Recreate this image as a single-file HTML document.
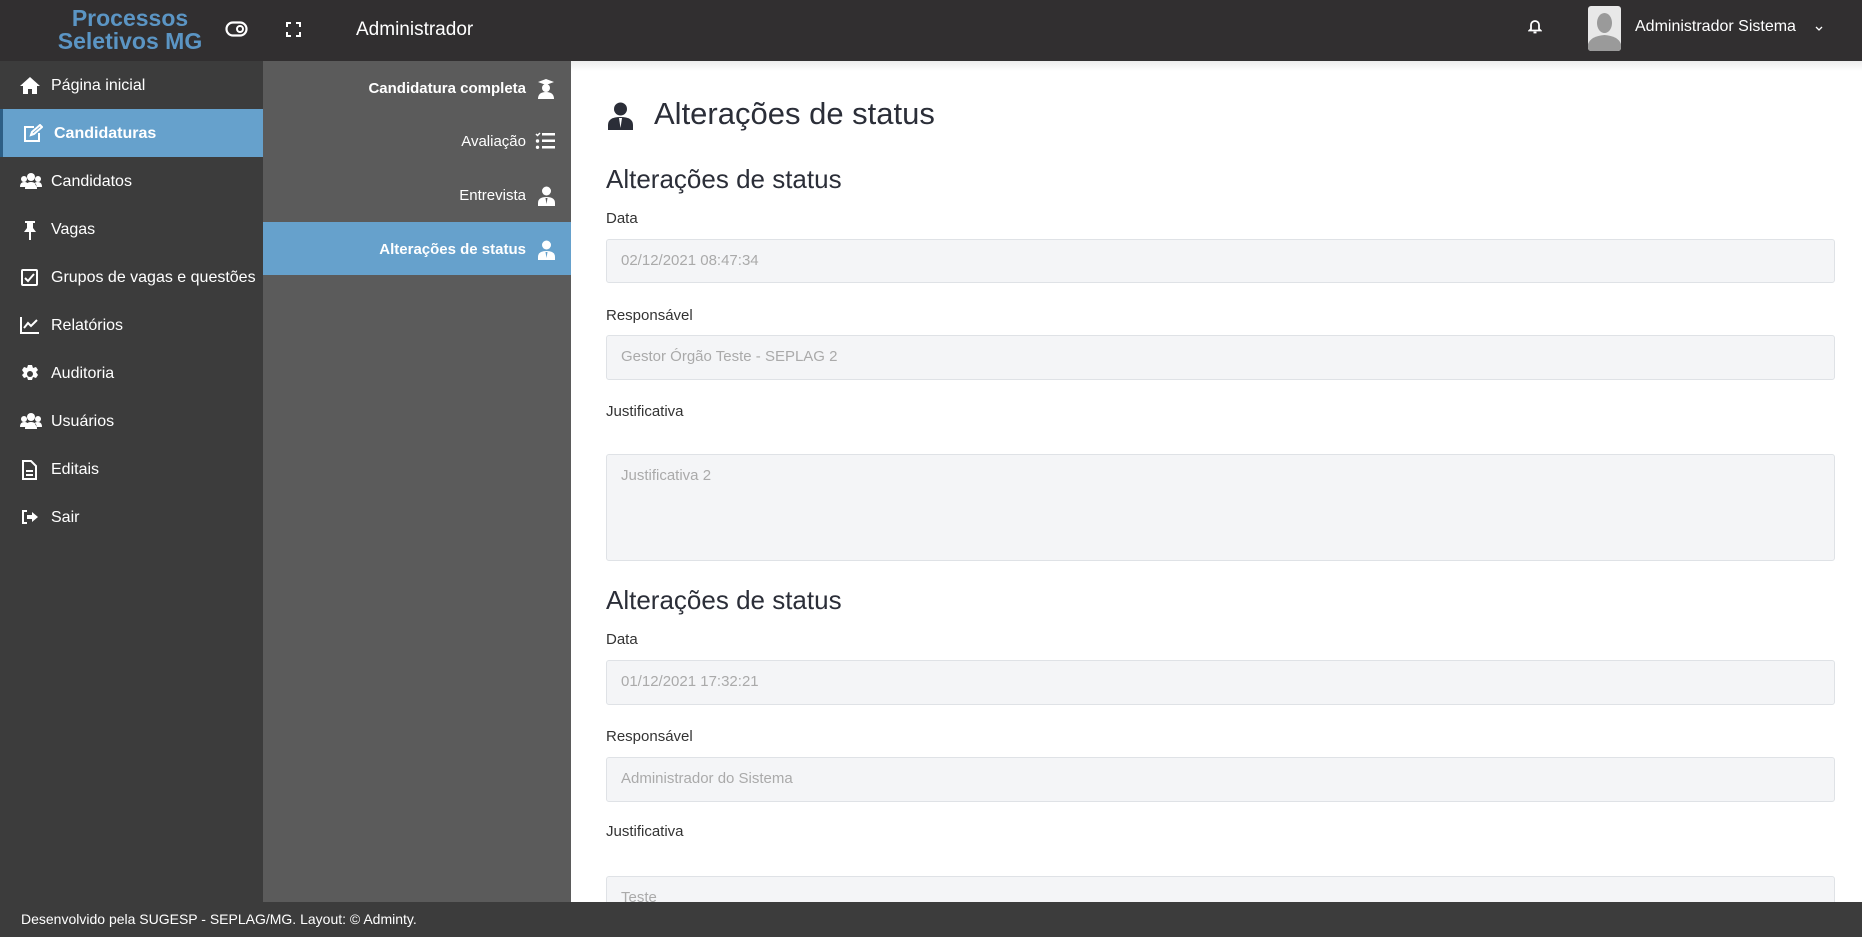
<!DOCTYPE html>
<html><head><meta charset="utf-8"><style>
*{box-sizing:border-box;margin:0;padding:0}
body{width:1862px;height:937px;overflow:hidden;font-family:"Liberation Sans",sans-serif;background:#fff;position:relative}
.hdr{position:absolute;left:0;top:0;width:1862px;height:61px;background:#312f30;color:#fff}
.logo{position:absolute;left:20px;top:7px;width:220px;text-align:center;color:#5b95c4;font-weight:bold;font-size:23px;line-height:23px}
.side{position:absolute;left:0;top:61px;width:263px;height:841px;background:#3c3c3c}
.sub{position:absolute;left:263px;top:61px;width:308px;height:841px;background:#5b5b5b}
.si{position:absolute;left:0;width:263px;height:48px;color:#fff;font-size:16px;line-height:50px;padding-left:51px}
.si svg{position:absolute;left:20px;top:15px}
.si.act{background:#66a1cc;border-left:3px solid #2d5f86;font-weight:bold}
.sb{position:absolute;left:0;width:308px;height:53px;color:#fff;font-size:15px;line-height:55px;text-align:right;padding-right:45px}
.sb svg{position:absolute;right:16px;top:18px}
.sb.act{background:#66a1cc;font-weight:bold}
.main{position:absolute;left:571px;top:61px;width:1291px;height:841px;overflow:hidden}
.lbl{position:absolute;left:35px;font-size:15px;color:#333}
.inp{position:absolute;left:35px;width:1229px;background:#f4f5f7;border:1px solid #dfe2e6;border-radius:3px;color:#aaa;font-size:15px;padding:12px 14px}
.h2{position:absolute;left:35px;font-size:26px;color:#2b2e38}
.foot{position:absolute;left:0;top:902px;width:1862px;height:35px;background:#3c3c3c;color:#fff;font-size:14px;line-height:35px;padding-left:21px}
</style></head><body>
<div class="hdr">
 <div class="logo">Processos<br>Seletivos MG</div>
 <svg style="position:absolute;left:225px;top:21px" width="23" height="16" viewBox="0 0 23 16"><rect x="1.5" y="1.5" width="20" height="13" rx="6.5" fill="none" stroke="#fff" stroke-width="2.2"/><circle cx="15" cy="8" r="3" fill="none" stroke="#fff" stroke-width="2"/></svg>
 <svg style="position:absolute;left:286px;top:22px" width="15" height="15" viewBox="0 0 15 15" fill="none" stroke="#fff" stroke-width="2"><path d="M1 5V1H5M10 1H14V5M14 10V14H10M5 14H1V10"/></svg>
 <div style="position:absolute;left:356px;top:19px;font-size:19px">Administrador</div>
 <svg style="position:absolute;left:1528px;top:18px" width="14" height="16" viewBox="0 0 14 16" fill="none" stroke="#fff" stroke-width="1.8"><path d="M3 11V7a4 4 0 0 1 8 0v4l1.5 1.5h-11z"/><path d="M5.5 14.5h3"/></svg>
 <div style="position:absolute;left:1588px;top:6px;width:33px;height:45px;background:#e8e8e8;border-radius:3px;overflow:hidden"><svg width="33" height="45" viewBox="0 0 33 45"><ellipse cx="16.5" cy="17" rx="7.5" ry="10" fill="#9a9a9a"/><path d="M0 45V38q3-8 16.5-9q13.5 1 16.5 9v7z" fill="#9a9a9a"/></svg></div>
 <div style="position:absolute;left:1635px;top:18px;font-size:16px">Administrador Sistema</div>
 <svg style="position:absolute;left:1815px;top:26px" width="8" height="6" viewBox="0 0 8 6" fill="none" stroke="#fff" stroke-width="1.3"><path d="M1 1l3 3 3-3"/></svg>
</div>
<div class="side">
 <div class="si" style="top:0"><svg width="20" height="18" viewBox="0 0 20 18" fill="#fff"><path d="M10 1L0 10h3v8h5v-5h4v5h5v-8h3z"/></svg>Página inicial</div>
 <div class="si act" style="top:48px"><svg width="20" height="18" viewBox="0 0 20 18" fill="none" stroke="#fff" stroke-width="2"><path d="M11 3H2v14h14V9"/><path d="M8 11l1-3 8-7 2 2-8 7z"/></svg>Candidaturas</div>
 <div class="si" style="top:96px"><svg width="22" height="18" viewBox="0 0 22 18" fill="#fff"><circle cx="11" cy="5" r="4"/><circle cx="4" cy="7" r="3"/><circle cx="18" cy="7" r="3"/><path d="M5 17q0-7 6-7t6 7zM0 15q0-5 4-5t3 2l-2 3zM22 15q0-5-4-5t-3 2l2 3z"/></svg>Candidatos</div>
 <div class="si" style="top:144px"><svg width="20" height="20" viewBox="0 0 20 20" fill="#fff"><path d="M5 1h10v2h-2v5l3 4H4l3-4V3H5zM9 12h2v8H9z"/></svg>Vagas</div>
 <div class="si" style="top:192px"><svg width="20" height="20" viewBox="0 0 20 20" fill="none" stroke="#fff" stroke-width="2"><rect x="2" y="2" width="15" height="15" rx="1"/><path d="M5 10l3 3 6-7"/></svg>Grupos de vagas e questões</div>
 <div class="si" style="top:240px"><svg width="20" height="18" viewBox="0 0 20 18" fill="none" stroke="#fff" stroke-width="2"><path d="M1 1v16h18"/><path d="M4 12l4-5 3 3 6-6"/></svg>Relatórios</div>
 <div class="si" style="top:288px"><svg width="20" height="20" viewBox="0 0 20 20" fill="#fff"><path d="M8 1h4l1 3 3-1 2 3-2 2 2 3-2 3-3-1-1 3H8l-1-3-3 1-2-3 2-2-2-3 2-3 3 1z"/><circle cx="10" cy="10" r="3" fill="#3c3c3c"/></svg>Auditoria</div>
 <div class="si" style="top:336px"><svg width="22" height="18" viewBox="0 0 22 18" fill="#fff"><circle cx="11" cy="5" r="4"/><circle cx="4" cy="7" r="3"/><circle cx="18" cy="7" r="3"/><path d="M5 17q0-7 6-7t6 7zM0 15q0-5 4-5t3 2l-2 3zM22 15q0-5-4-5t-3 2l2 3z"/></svg>Usuários</div>
 <div class="si" style="top:384px"><svg width="18" height="20" viewBox="0 0 18 20" fill="none" stroke="#fff" stroke-width="2"><path d="M3 1h8l5 5v13H3z"/><path d="M6 11h7M6 15h7"/></svg>Editais</div>
 <div class="si" style="top:432px"><svg width="20" height="18" viewBox="0 0 20 18" fill="#fff"><path d="M7 2H2v14h5v-2H4V4h3z"/><path d="M12 4l6 5-6 5v-3H7V7h5z"/></svg>Sair</div>
</div>
<div class="sub">
 <div class="sb" style="top:0;font-weight:bold">Candidatura completa<svg width="18" height="20" viewBox="0 0 18 20" fill="#fff"><path d="M1 3l8-3 8 3-8 3z"/><circle cx="9" cy="9" r="4"/><path d="M1 20q0-7 8-7t8 7z"/></svg></div>
 <div class="sb" style="top:53px">Avaliação<svg width="20" height="18" viewBox="0 0 20 18" fill="#fff"><path d="M1 2l1.5 1.5L5 1" stroke="#fff" fill="none" stroke-width="1.5"/><rect x="7" y="1" width="13" height="2.5"/><rect x="7" y="7.5" width="13" height="2.5"/><rect x="7" y="14" width="13" height="2.5"/><circle cx="2.5" cy="9" r="1.7"/><circle cx="2.5" cy="15.3" r="1.7"/></svg></div>
 <div class="sb" style="top:107px">Entrevista<svg width="17" height="20" viewBox="0 0 17 20" fill="#fff"><circle cx="8.5" cy="5" r="4.5"/><path d="M0 20v-3q0-6 8.5-6t8.5 6v3z"/><path d="M7.5 12h2l-1 6z" fill="#5b5b5b"/></svg></div>
 <div class="sb act" style="top:161px">Alterações de status<svg width="17" height="20" viewBox="0 0 17 20" fill="#fff"><circle cx="8.5" cy="5" r="4.5"/><path d="M0 20v-3q0-6 8.5-6t8.5 6v3z"/><path d="M7.5 12h2l-1 6z" fill="#66a1cc"/></svg></div>
</div>
<div class="main">
 <div style="position:absolute;left:0;top:0;width:1291px;height:10px;background:linear-gradient(#ececec,#fff)"></div>
 <svg style="position:absolute;left:37px;top:41px" width="25" height="28" viewBox="0 0 25 28" fill="#2b2e38"><circle cx="12.5" cy="7" r="6.5"/><path d="M0 28v-5q0-8 12.5-8t12.5 8v5z"/><path d="M11 16h3l-1.5 10z" fill="#fff"/></svg>
 <div style="position:absolute;left:83px;top:35px;font-size:31px;color:#2b2e38">Alterações de status</div>
 <div class="h2" style="top:103px">Alterações de status</div>
 <div class="lbl" style="top:149px">Data</div>
 <div class="inp" style="top:178px;height:44px">02/12/2021 08:47:34</div>
 <div class="lbl" style="top:246px">Responsável</div>
 <div class="inp" style="top:274px;height:45px">Gestor Órgão Teste - SEPLAG 2</div>
 <div class="lbl" style="top:342px">Justificativa</div>
 <div class="inp" style="top:393px;height:107px">Justificativa 2</div>
 <div class="h2" style="top:524px">Alterações de status</div>
 <div class="lbl" style="top:570px">Data</div>
 <div class="inp" style="top:599px;height:45px">01/12/2021 17:32:21</div>
 <div class="lbl" style="top:667px">Responsável</div>
 <div class="inp" style="top:696px;height:45px">Administrador do Sistema</div>
 <div class="lbl" style="top:762px">Justificativa</div>
 <div class="inp" style="top:815px;height:107px">Teste</div>
</div>
<div class="foot">Desenvolvido pela SUGESP - SEPLAG/MG. Layout: © Adminty.</div>
</body></html>
